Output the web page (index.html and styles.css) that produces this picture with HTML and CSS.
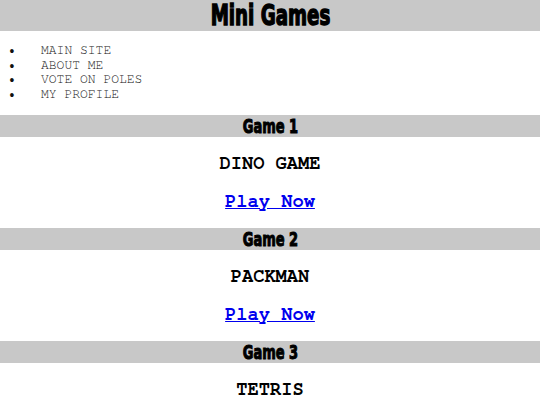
FILE: index.html
```html
<!DOCTYPE html>
<html>
<head>
<meta charset="utf-8">
<title>Mini Games</title>
<link rel="stylesheet" href="styles.css">
</head>
<body>
<header class="bar bar-title">
  <h1 class="impact impact-title">Mini Games</h1>
</header>
<ul class="nav">
  <li>MAIN SITE</li>
  <li>ABOUT ME</li>
  <li>VOTE ON POLES</li>
  <li>MY PROFILE</li>
</ul>
<section class="game">
  <div class="bar bar-game"><h2 class="impact impact-game">Game 1</h2></div>
  <p class="game-name">DINO GAME</p>
  <p class="game-link"><a href="#">Play Now</a></p>
</section>
<section class="game">
  <div class="bar bar-game"><h2 class="impact impact-game">Game 2</h2></div>
  <p class="game-name">PACKMAN</p>
  <p class="game-link"><a href="#">Play Now</a></p>
</section>
<section class="game">
  <div class="bar bar-game"><h2 class="impact impact-game">Game 3</h2></div>
  <p class="game-name">TETRIS</p>
  <p class="game-link"><a href="#">Play Now</a></p>
</section>
</body>
</html>
```
FILE: styles.css
```css
html, body {
  margin: 0;
  padding: 0;
  background: #ffffff;
}
body {
  font-family: "Nimbus Mono PS", "FreeMono", "Liberation Mono", "Courier New", monospace;
  color: #000;
}
.bar {
  background: #c8c8c8;
  display: flex;
  align-items: center;
  justify-content: center;
  overflow: hidden;
}
.bar-title {
  height: 31px;
}
.bar-game {
  height: 22px;
}
.impact {
  margin: 0;
  display: inline-block;
  font-family: "DejaVu Sans", sans-serif;
  font-stretch: condensed;
  font-weight: bold;
  color: #000;
  line-height: 1;
  white-space: nowrap;
}
.impact-title {
  font-size: 29px;
  -webkit-text-stroke: 1.4px #000;
  transform: scaleX(0.7);
}
.impact-game {
  font-size: 19px;
  -webkit-text-stroke: 1px #000;
  transform: scaleX(0.76);
}
.nav {
  list-style: none;
  margin: 13px 0;
  padding: 0 0 0 8px;
  font-size: 13px;
  line-height: 14.5px;
  color: #111;
}
.nav li {
  display: flex;
}
.nav li::before {
  content: "\2022";
  width: 33px;
  flex: none;
}
.game-name,
.game-link {
  margin: 16px 0;
  text-align: center;
  font-size: 18.72px;
  line-height: 21.5px;
  font-weight: bold;
}
.game-link a {
  color: #0000ee;
  text-decoration: underline;
}
```
